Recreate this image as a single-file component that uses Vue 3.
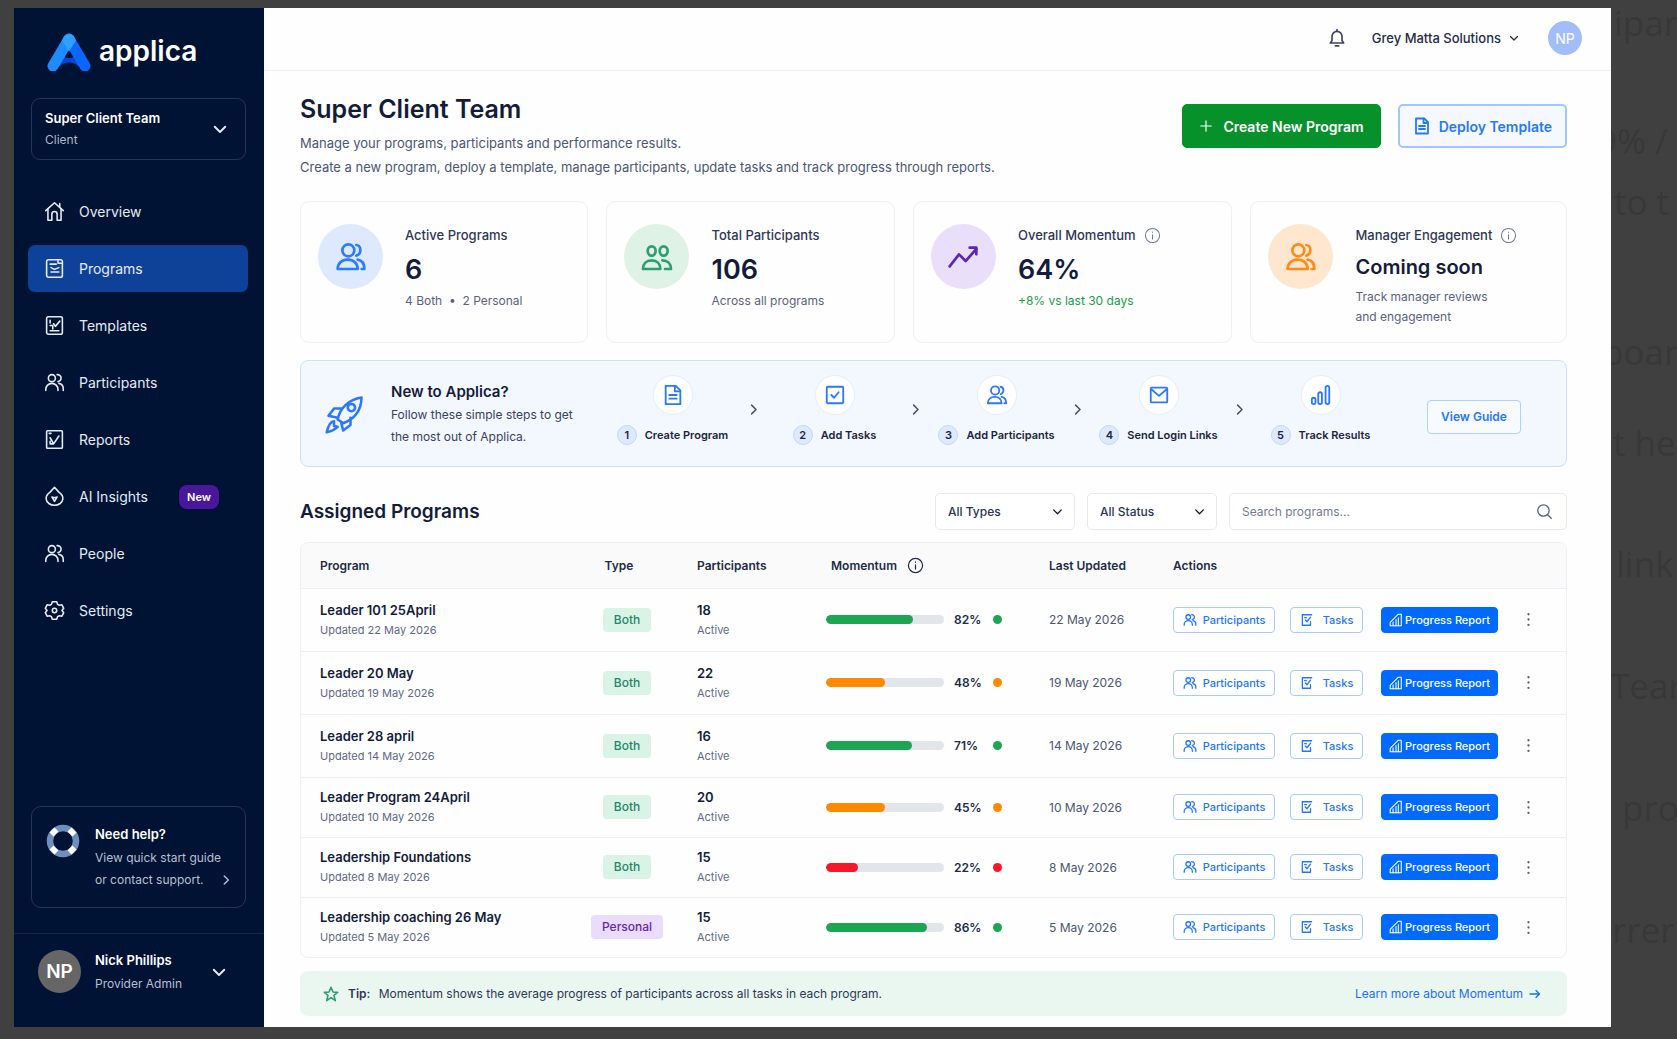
<template>
  <div class="backdrop">
    <div class="behind" aria-hidden="true">
      <span v-for="word in behind" :key="word.text" :style="{ top: word.top + 'px', left: word.left + 'px' }">{{ word.text }}</span>
    </div>

    <div class="window">
      <aside class="sidebar">
        <a class="logo" href="#">
          <svg width="44" height="38" viewBox="0 0 44 38" aria-hidden="true">
            <path d="M14 24h17l3 9H10z" fill="#0645d8" />
            <path d="M22 6 6 33" stroke="#1e8bff" stroke-width="11" stroke-linecap="round" />
            <path d="M22 6 38 33" stroke="#0b66ff" stroke-width="11" stroke-linecap="round" />
            <path d="M17 3.600a6 6 0 0 1 10 0l2 4-7 11-7-11z" fill="#2ea0ff" />
            <path d="m22 19 3.500 6h-7z" fill="#00123a" />
            <path d="M14 32c4-3.500 12-3.500 16 0l3 7H11z" fill="#001334" />
          </svg>
          <span>applica</span>
        </a>

        <button class="team">
          <span class="team-text">
            <b>Super Client Team</b>
            <small>Client</small>
          </span>
          <Icon name="down" :size="18" :stroke="2.5" />
        </button>

        <nav>
          <a v-for="item in nav" :key="item.label" href="#" :class="{ active: item.label === activePage }" @click.prevent="activePage = item.label">
            <Icon :name="item.icon" :size="21" :stroke="1.8" />
            <span>{{ item.label }}</span>
            <em v-if="item.isNew">New</em>
          </a>
        </nav>

        <a class="help" href="#">
          <svg width="34" height="34" viewBox="0 0 34 34" fill="none" aria-hidden="true">
            <circle cx="17" cy="17" r="13" stroke="#6f8fbe" stroke-width="6.500" />
            <path d="m6 6 4 4m18-4-4 4M6 28l4-4m18 4-4-4" stroke="#fff" stroke-width="7" />
          </svg>
          <span class="help-text">
            <b>Need help?</b>
            <span>View quick start guide</span>
            <span class="help-last">or contact support. <Icon name="right" :size="14" :stroke="2.5" /></span>
          </span>
        </a>

        <button class="user">
          <span class="user-avatar">NP</span>
          <span class="user-text">
            <b>Nick Phillips</b>
            <small>Provider Admin</small>
          </span>
          <Icon name="down" :size="18" :stroke="2.5" />
        </button>
      </aside>

      <div class="page">
        <header class="topbar">
          <button class="plain" aria-label="Notifications"><Icon name="bell" :size="20" /></button>
          <button class="plain org">Grey Matta Solutions <Icon name="down" :size="12" :stroke="2.5" /></button>
          <button class="plain avatar" aria-label="Account">NP</button>
        </header>

        <main>
          <section class="intro">
            <div>
              <h1>Super Client Team</h1>
              <p>Manage your programs, participants and performance results.</p>
              <p>Create a new program, deploy a template, manage participants, update tasks and track progress through reports.</p>
            </div>
            <div class="intro-actions">
              <button class="create"><Icon name="plus" :size="14" />Create New Program</button>
              <button class="deploy"><Icon name="doc" :size="18" :stroke="2.4" />Deploy Template</button>
            </div>
          </section>

          <section class="stats">
            <article v-for="stat in stats" :key="stat.label" class="card">
              <span class="stat-icon" :class="stat.tone"><Icon :name="stat.icon" :size="32" /></span>
              <div>
                <h3>{{ stat.label }} <Icon v-if="stat.info" name="info" :size="17" :stroke="1.5" /></h3>
                <strong :class="{ soon: stat.tone === 'orange' }">{{ stat.value }}</strong>
                <p :class="{ gain: stat.tone === 'purple' }"><span v-for="line in stat.note" :key="line">{{ line }}</span></p>
              </div>
            </article>
          </section>

          <section class="guide">
            <Icon class="rocket" name="rocket" :size="44" :stroke="1.4" />
            <div class="guide-text">
              <h3>New to Applica?</h3>
              <p>Follow these simple steps to get<br>the most out of Applica.</p>
            </div>
            <ol>
              <template v-for="(step, i) in steps" :key="step.label">
                <li v-if="i" class="sep" aria-hidden="true"><Icon name="right" :size="15" :stroke="2.4" /></li>
                <li class="step">
                  <span class="step-icon"><Icon :name="step.icon" :size="22" /></span>
                  <span class="step-label"><i>{{ i + 1 }}</i>{{ step.label }}</span>
                </li>
              </template>
            </ol>
            <button class="view">View Guide</button>
          </section>

          <section class="list-head">
            <h2>Assigned Programs</h2>
            <div class="select type">
              <select v-model="type" aria-label="Type">
                <option>All Types</option>
                <option>Both</option>
                <option>Personal</option>
              </select>
              <Icon name="down" :size="13" :stroke="2.5" />
            </div>
            <div class="select status">
              <select v-model="status" aria-label="Status">
                <option>All Status</option>
                <option>Active</option>
              </select>
              <Icon name="down" :size="13" :stroke="2.5" />
            </div>
            <label class="search">
              <input v-model="search" type="search" placeholder="Search programs..." aria-label="Search programs">
              <Icon name="search" :size="17" :stroke="1.8" />
            </label>
          </section>

          <div class="table-box">
            <table>
              <thead>
                <tr>
                  <th>Program</th>
                  <th class="c-type">Type</th>
                  <th class="c-part">Participants</th>
                  <th class="c-mom"><span>Momentum <Icon name="info" :size="17" :stroke="1.7" /></span></th>
                  <th class="c-date">Last Updated</th>
                  <th class="c-act">Actions</th>
                </tr>
              </thead>
              <tbody>
                <tr v-for="row in visible" :key="row.name">
                  <td><b>{{ row.name }}</b><small>Updated {{ row.date }}</small></td>
                  <td class="c-type"><span class="tag" :class="row.type.toLowerCase()">{{ row.type }}</span></td>
                  <td><b>{{ row.people }}</b><small>Active</small></td>
                  <td>
                    <div class="momentum" :class="row.level">
                      <span class="track"><span :style="{ width: row.bar + '%' }"></span></span>
                      <b>{{ row.momentum }}%</b>
                      <i></i>
                    </div>
                  </td>
                  <td>{{ row.date }}</td>
                  <td>
                    <div class="actions">
                      <button class="outline people"><Icon name="people" :size="14" :stroke="2.2" />Participants</button>
                      <button class="outline tasks"><Icon name="task" :size="14" :stroke="2.2" />Tasks</button>
                      <button class="report"><Icon name="chart" :size="14" :stroke="1.8" />Progress Report</button>
                      <button class="plain more" aria-label="More"><Icon name="dots" :size="17" /></button>
                    </div>
                  </td>
                </tr>
              </tbody>
            </table>
          </div>

          <section class="tip">
            <Icon name="star" :size="16" :stroke="2.4" />
            <p><b>Tip:</b> Momentum shows the average progress of participants across all tasks in each program.</p>
            <a href="#">Learn more about Momentum <Icon name="arrow" :size="12" :stroke="2.6" /></a>
          </section>
        </main>
      </div>
    </div>
  </div>
</template>

<script setup>
import { computed, h, ref } from 'vue'

const paths = {
  home: ['M2 11 12 2l10 9', 'M4.500 9v13H9v-7a3 3 0 0 1 6 0v7h4.500V9', 'M18 3v4'],
  programs: ['M5 2h14a2 2 0 0 1 2 2v16a2 2 0 0 1-2 2H5a2 2 0 0 1-2-2V4a2 2 0 0 1 2-2z', 'M7 7h7M8 11l4 2 5-2M8 16h9', 'M16 2v4h5'],
  templates: ['M5 2h14a2 2 0 0 1 2 2v16a2 2 0 0 1-2 2H5a2 2 0 0 1-2-2V4a2 2 0 0 1 2-2z', 'M7 6v3M7 12h3v4M11 10l2 3 5-6M7 18h10'],
  reports: ['M4 2h16a1 1 0 0 1 1 1v18a1 1 0 0 1-1 1H4a1 1 0 0 1-1-1V3a1 1 0 0 1 1-1z', 'M6 5h2M7 10l4 7 6-9M7 14v3h3'],
  people: ['M9 3a4 4 0 1 1 0 8 4 4 0 0 1 0-8z', 'M2 21v-1a7 7 0 0 1 14 0v1', 'M15 3a4 4 0 1 1 1 8', 'M17 13c3 .5 5 3 5 6v2'],
  users: ['M10 2.500a4 4 0 1 1 0 9 4 4 0 0 1 0-9z', 'M2 21c0-4 3-7 7.500-7s7.500 3 7.500 7z', 'M16 3c4 .5 4 7 0 8', 'M17 14c3 .5 5 3 5 7h-2'],
  pair: ['M8 4a3 3.500 0 1 1 0 7 3 3.500 0 0 1 0-7z', 'M17 4a3 3.500 0 1 1 0 7 3 3.500 0 0 1 0-7z', 'M1.500 21c0-4 2.500-6.500 6.500-6.500s6.500 2.500 6.500 6.500z', 'M16 14.500c4 0 6.500 2.500 6.500 6.500H18'],
  insight: ['M12 1.500 17 7c3 2 5 4 4.500 8-.5 4-4.500 7-9.500 7s-9-3-9.500-7C2 11 4 9 7 7z', 'M9 12.500l3 5 3-5-3 1z'],
  gear: ['M12 9.500a2.500 2.500 0 1 1 0 5 2.500 2.500 0 0 1 0-5z', 'M9.500 2h5l1 3 2 1 3-.5 2 4-2 2.500 2 2.500-2 4-3-.5-2 1-1 3h-5l-1-3-2-1-3 .5-2-4 2-2.500-2-2.500 2-4 3 .5 2-1z'],
  down: ['m5 9 7 7 7-7'],
  right: ['m9 5 7 7-7 7'],
  bell: ['M4 18h16l-2-3v-5a6 6 0 0 0-12 0v5z', 'M10 21.500h4', 'M12 2v2'],
  plus: ['M12 3v18M3 12h18'],
  doc: ['M4 2h11l5 5v15H4z', 'M14 2v6h6', 'M8 12h8M8 16h8'],
  trend: ['m2 19 7-9 5 5 8-9', 'M17 5h5v5'],
  info: ['M12 2a10 10 0 1 1 0 20 10 10 0 0 1 0-20z', 'M12 11v6M12 7v.5'],
  check: ['M4 3h16a1 1 0 0 1 1 1v16a1 1 0 0 1-1 1H4a1 1 0 0 1-1-1V4a1 1 0 0 1 1-1z', 'm8 12 3 3 5-6'],
  task: ['M20 3H4v18h14v-6', 'm9 12 3 3 6-8', 'M8 8h3'],
  mail: ['M4 4h16a1 1 0 0 1 1 1v14a1 1 0 0 1-1 1H4a1 1 0 0 1-1-1V5a1 1 0 0 1 1-1z', 'm4 6 8 7 8-7'],
  bars: ['M2 17a2 2 0 0 1 4 0v3a2 2 0 0 1-4 0z', 'M9 11a2 2 0 0 1 4 0v9a2 2 0 0 1-4 0z', 'M17 4a2 2 0 0 1 4 0v16a2 2 0 0 1-4 0z'],
  chart: ['M2 22V16L16 2h5v20z', 'M7 22v-7M12 22V11M16 22V8'],
  rocket: ['M8 15C9 9 14 4 21 3c0 7-4 12-10 14z', 'M15.500 6.500a2 2 0 1 1 0 4 2 2 0 0 1 0-4z', 'M10 9H6l-3 4 5 1', 'M15 14v4l-4 3-1-4', 'M6 16c-2 0-3 2-4 6 4-1 5-2 6-3l-2-.5z'],
  search: ['M10.500 2.500a8 8 0 1 1 0 16 8 8 0 0 1 0-16z', 'm16.500 16.500 5 5'],
  dots: ['M12 4.500v.1M12 12v.1M12 19.500v.1'],
  star: ['m12 2 3 7 7 .5-5.500 4.500L18.500 22 12 17.500 5.500 22l2-8L2 9.500 9 9z'],
  arrow: ['M2 12h19M14 5l7 7-7 7'],
}

// small stroke icon on a 24 unit grid
const Icon = (props) => h('svg', {
  class: 'icon',
  width: props.size,
  height: props.size,
  viewBox: '0 0 24 24',
  fill: 'none',
  stroke: 'currentColor',
  'stroke-width': props.name === 'dots' ? 3.2 : props.stroke || 2,
  'stroke-linecap': 'round',
  'stroke-linejoin': 'round',
  'aria-hidden': 'true',
}, paths[props.name].map(d => h('path', { d })))
Icon.props = ['name', 'size', 'stroke']

const activePage = ref('Programs')
const type = ref('All Types')
const status = ref('All Status')
const search = ref('')

const behind = [
  { text: 'ipar', top: 0, left: 1614 },
  { text: '9% /', top: 118, left: 1597 },
  { text: 'to t', top: 179, left: 1614 },
  { text: 'boar', top: 329, left: 1602 },
  { text: 't he', top: 420, left: 1613 },
  { text: 'link', top: 541, left: 1616 },
  { text: 'Tear', top: 663, left: 1610 },
  { text: 'pro', top: 785, left: 1622 },
  { text: 'rrer', top: 907, left: 1612 },
]

const nav = [
  { label: 'Overview', icon: 'home' },
  { label: 'Programs', icon: 'programs' },
  { label: 'Templates', icon: 'templates' },
  { label: 'Participants', icon: 'people' },
  { label: 'Reports', icon: 'reports' },
  { label: 'AI Insights', icon: 'insight', isNew: true },
  { label: 'People', icon: 'people' },
  { label: 'Settings', icon: 'gear' },
]

const stats = [
  { label: 'Active Programs', value: '6', note: ['4 Both  •  2 Personal'], icon: 'users', tone: 'blue' },
  { label: 'Total Participants', value: '106', note: ['Across all programs'], icon: 'pair', tone: 'green' },
  { label: 'Overall Momentum', value: '64%', note: ['+8% vs last 30 days'], icon: 'trend', tone: 'purple', info: true },
  { label: 'Manager Engagement', value: 'Coming soon', note: ['Track manager reviews', 'and engagement'], icon: 'users', tone: 'orange', info: true },
]

const steps = [
  { label: 'Create Program', icon: 'doc' },
  { label: 'Add Tasks', icon: 'check' },
  { label: 'Add Participants', icon: 'users' },
  { label: 'Send Login Links', icon: 'mail' },
  { label: 'Track Results', icon: 'bars' },
]

const rows = [
  { name: 'Leader 101 25April', date: '22 May 2026', type: 'Both', people: 18, momentum: 82, bar: 74, level: 'high' },
  { name: 'Leader 20 May', date: '19 May 2026', type: 'Both', people: 22, momentum: 48, bar: 50, level: 'mid' },
  { name: 'Leader 28 april', date: '14 May 2026', type: 'Both', people: 16, momentum: 71, bar: 73, level: 'high' },
  { name: 'Leader Program 24April', date: '10 May 2026', type: 'Both', people: 20, momentum: 45, bar: 50, level: 'mid' },
  { name: 'Leadership Foundations', date: '8 May 2026', type: 'Both', people: 15, momentum: 22, bar: 27, level: 'low' },
  { name: 'Leadership coaching 26 May', date: '5 May 2026', type: 'Personal', people: 15, momentum: 86, bar: 86, level: 'high' },
]

const visible = computed(() => rows.filter(row =>
  (type.value === 'All Types' || row.type === type.value) &&
  row.name.toLowerCase().includes(search.value.toLowerCase())
))
</script>

<style>
body {
  background: #404040;
}
</style>

<style scoped>
* {
  box-sizing: border-box;
}

.backdrop {
  position: relative;
  display: grid;
  min-height: 100vh;
  padding: 8px 66px 12px 14px;
  overflow: hidden;
  background: #404040;
  color: #141c3a;
  font-family: Inter, "Liberation Sans", sans-serif;
  font-size: 12px;
}

.behind {
  position: absolute;
  inset: 0;
}

.behind span {
  position: absolute;
  color: #383838;
  font: 35px/46px "Open Sans", sans-serif;
  white-space: nowrap;
}

.window {
  position: relative;
  display: grid;
  grid-template-columns: 250px minmax(0, 1fr);
  background: #fefefe;
}

h1, h2, h3, p, ol {
  margin: 0;
  padding: 0;
}

b {
  font-weight: 600;
}

button, select, input {
  font: inherit;
  color: inherit;
}

button {
  display: inline-flex;
  align-items: center;
  cursor: pointer;
}

a {
  color: inherit;
  text-decoration: none;
}

.icon {
  flex: none;
}

.plain {
  padding: 0;
  border: 0;
  background: none;
}

/* sidebar */
.sidebar {
  display: flex;
  flex-direction: column;
  background: #001334;
  color: #e6eaf3;
}

.logo {
  display: flex;
  align-items: center;
  gap: 8px;
  margin: 21px 0 0 33px;
  height: 46px;
  color: #fff;
  font-size: 28px;
  font-weight: 600;
  line-height: 40px;
}

.logo span {
  padding-bottom: 2px;
}

.team {
  justify-content: space-between;
  margin: 23px 18px 0 17px;
  height: 62px;
  padding: 0 16px 0 13px;
  border: 1px solid #24355a;
  border-radius: 9px;
  background: none;
  text-align: left;
}

.team-text b, .team-text small {
  display: block;
  font-size: 13px;
  line-height: 22px;
}

.team-text small {
  color: #aeb8cc;
  font-size: 12px;
}

nav {
  display: flex;
  flex-direction: column;
  gap: 10px;
  margin: 28px 16px 0 14px;
}

nav a {
  display: flex;
  align-items: center;
  gap: 14px;
  height: 47px;
  padding: 0 29px 0 16px;
  border-radius: 7px;
  font-size: 14px;
  font-weight: 400;
}

nav a.active {
  background: #0d4298;
}

nav em {
  margin-left: auto;
  padding: 0 8px;
  border-radius: 8px;
  background: #4a179c;
  color: #fff;
  font-size: 11px;
  font-style: normal;
  font-weight: 600;
  line-height: 24px;
}

.help {
  display: flex;
  gap: 15px;
  margin: auto 18px 25px 17px;
  padding: 17px 12px 16px 14px;
  height: 102px;
  border: 1px solid #24355a;
  border-radius: 10px;
  color: #b6bfd2;
}

.help-text {
  flex: 1;
  line-height: 22px;
  white-space: nowrap;
}

.help-text > * {
  display: block;
}

.help-text b, .team-text b, .user-text b {
  color: #fff;
  font-size: 13px;
}

.help-text b {
  margin-bottom: 3px;
  line-height: 20px;
}

.help-text .help-last {
  display: flex;
  align-items: center;
  justify-content: space-between;
}

.user {
  gap: 14px;
  height: 94px;
  padding: 0 36px 18px 24px;
  border: 0;
  border-top: 1px solid #14274b;
  background: none;
  text-align: left;
}

.user-avatar {
  display: grid;
  place-items: center;
  width: 43px;
  height: 43px;
  border-radius: 50%;
  background: #666;
  color: #fff;
  font-size: 19px;
  font-weight: 600;
}

.user-text {
  flex: 1;
}

.user-text b, .user-text small {
  display: block;
  font-size: 13px;
  line-height: 23px;
}

.user-text small {
  color: #b6bfd2;
  font-size: 12px;
}

/* header */
.topbar {
  display: flex;
  align-items: center;
  justify-content: flex-end;
  height: 63px;
  padding: 0 29px 2px 0;
  border-bottom: 1px solid #eceff5;
  color: #3c4560;
}

.org {
  gap: 7px;
  margin: 0 28px 0 25px;
  color: #252d46;
  font-size: 13px;
  font-weight: 500;
}

.avatar {
  justify-content: center;
  width: 34px;
  height: 34px;
  border-radius: 50%;
  background: #a3bdfb;
  color: #fff;
  font-size: 14px;
}

main {
  padding: 21px 44px 10px 36px;
}

.intro {
  display: flex;
  align-items: flex-start;
  justify-content: space-between;
}

h1 {
  margin-bottom: 5px;
  font-size: 25px;
  font-weight: 600;
  line-height: 34px;
}

.intro p {
  color: #4c5673;
  font-size: 13px;
  line-height: 24px;
}

.intro-actions {
  display: flex;
  gap: 17px;
  padding-top: 12px;
}

.create, .deploy {
  justify-content: center;
  height: 44px;
  border: 1px solid #07912b;
  border-radius: 5px;
  background: #07912b;
  color: #fff;
  font-size: 14px;
  font-weight: 600;
  gap: 10px;
  padding: 0 16px;
  white-space: nowrap;
}

.deploy {
  padding: 0 13px;
  border: 2px solid #a3c5ff;
  background: #f5f9ff;
  color: #2678fb;
  gap: 8px;
}

.stats {
  display: grid;
  grid-template-columns: 288fr 288fr 319fr 316fr;
  gap: 18px;
  margin-top: 22px;
}

.card {
  display: flex;
  gap: 22px;
  height: 142px;
  padding: 22px 17px;
  border: 1px solid #edf0f6;
  border-radius: 9px;
}

.stat-icon {
  display: grid;
  flex: none;
  place-items: center;
  width: 65px;
  height: 65px;
  border-radius: 50%;
}

.blue { background: #dfe9fd; color: #2b7bff; }
.green { background: #def3e6; color: #2f9d70; }
.purple { background: #e9dffa; color: #5b25b5; }
.orange { background: #fee6cf; color: #ff8a17; }

.card h3 {
  display: flex;
  align-items: center;
  gap: 8px;
  height: 22px;
  color: #2e3755;
  font-size: 13px;
  font-weight: 500;
}

.card h3 .icon {
  color: #707a94;
}

.card strong {
  display: block;
  height: 45px;
  font-size: 27px;
  font-weight: 600;
  line-height: 48px;
}

.card strong.soon {
  height: 41px;
  font-size: 20px;
  line-height: 42px;
}

.card p {
  color: #596280;
  line-height: 20px;
  white-space: pre;
}

.card p span {
  display: block;
}

.card p.gain {
  color: #15a046;
}

/* onboarding strip */
.guide {
  display: flex;
  align-items: center;
  height: 107px;
  margin-top: 17px;
  padding: 0 45px 0 22px;
  border: 1px solid #cfe0fd;
  border-radius: 8px;
  background: #f3f7fe;
}

.rocket {
  color: #2b78fa;
}

.guide-text {
  flex: none;
  width: 208px;
  margin-left: 24px;
}

.guide h3 {
  font-size: 15px;
  font-weight: 600;
  line-height: 24px;
}

.guide-text p {
  color: #39425f;
  font-size: 12px;
  line-height: 22px;
  white-space: nowrap;
}

ol {
  display: flex;
  flex: 1;
  align-items: center;
  padding-bottom: 8px;
  list-style: none;
}

.step {
  display: flex;
  flex: 1;
  flex-direction: column;
  align-items: center;
  gap: 10px;
  min-width: 0;
}

.step-icon {
  display: grid;
  place-items: center;
  width: 40px;
  height: 40px;
  border: 1px solid #e6eefb;
  border-radius: 50%;
  background: #fff;
  color: #2b78fa;
}

.step-label {
  display: flex;
  align-items: center;
  gap: 8px;
  color: #1c2440;
  font-size: 11px;
  font-weight: 600;
  white-space: nowrap;
}

.step-label i {
  display: grid;
  place-items: center;
  width: 20px;
  height: 20px;
  border: 1px solid #c2d7fd;
  border-radius: 50%;
  background: #dfe9fd;
  font-style: normal;
}

.sep {
  display: flex;
  color: #4a5162;
}

.view {
  justify-content: center;
  width: 94px;
  height: 34px;
  margin-top: 6px;
  margin-left: 33px;
  padding: 0;
  border: 1px solid #b3cffe;
  border-radius: 4px;
  background: #f7faff;
  color: #2678fb;
  font-weight: 600;
}

.list-head {
  display: flex;
  align-items: center;
  gap: 12px;
  margin: 26px 0 12px;
}

h2 {
  flex: 1;
  font-size: 19px;
  font-weight: 600;
  line-height: 30px;
}

.select, .search {
  position: relative;
  height: 37px;
  border: 1px solid #e6e9f1;
  border-radius: 5px;
  background: #fff;
}

.select.type { width: 140px; }
.select.status { width: 130px; }

select {
  width: 100%;
  height: 100%;
  padding: 0 12px;
  border: 0;
  background: none;
  appearance: none;
  color: #2b3452;
  font-weight: 500;
}

.select .icon {
  position: absolute;
  top: 11px;
  right: 10px;
  pointer-events: none;
}

.search {
  display: flex;
  align-items: center;
  width: 338px;
  padding: 0 13px 0 12px;
  color: #59627c;
}

.search input {
  flex: 1;
  min-width: 0;
  padding: 0;
  border: 0;
  outline: 0;
  background: none;
}

.search input::placeholder {
  color: #727b92;
  opacity: 1;
}

/* programs table */
.table-box {
  overflow: hidden;
  border: 1px solid #eceff5;
  border-radius: 8px;
}

table {
  width: 100%;
  table-layout: fixed;
  border-collapse: collapse;
}

.c-type { width: 140px; }
.c-part { width: 129px; }
.c-mom { width: 223px; }
.c-date { width: 124px; }
.c-act { width: 393px; }

th {
  height: 45px;
  padding: 0;
  background: #fafafb;
  color: #232b47;
  font-size: 12px;
  font-weight: 600;
  text-align: left;
}

th.c-type {
  padding-right: 16px;
}

.c-type {
  text-align: center;
}

.c-mom span {
  display: flex;
  align-items: center;
  gap: 10px;
  padding-left: 5px;
}

td {
  height: 63px;
  padding: 0;
  border-top: 1px solid #eceff5;
  color: #4c5673;
}

tr:nth-child(n + 4) td {
  height: 60px;
}

th:first-child, td:first-child {
  padding-left: 19px;
}

td > b, td > small {
  display: block;
  color: #141c3a;
  font-size: 13px;
  line-height: 20px;
  white-space: nowrap;
}

td > small {
  color: #606985;
  font-size: 11px;
}

.tag {
  display: inline-block;
  padding: 0 11px;
  border-radius: 4px;
  font-weight: 500;
  line-height: 24px;
}

.tag.both { background: #d9f3e7; color: #23866a; }
.tag.personal { background: #eadcfc; color: #6426b8; }

.momentum {
  display: flex;
  align-items: center;
}

.high { --level: #1ca654; }
.mid { --level: #ff8a00; }
.low { --level: #fb1528; }

.track {
  width: 118px;
  height: 9px;
  overflow: hidden;
  border-radius: 5px;
  background: #e2e5ea;
}

.track span {
  display: block;
  height: 100%;
  border-radius: 5px;
  background: var(--level);
}

.momentum b {
  width: 39px;
  margin-left: 10px;
  color: #232b47;
}

.momentum i {
  width: 9px;
  height: 9px;
  border-radius: 50%;
  background: var(--level);
}

.actions {
  display: flex;
  align-items: center;
}

.actions button {
  justify-content: center;
  white-space: nowrap;
}

.outline, .report {
  height: 26px;
  padding: 0;
  border: 1px solid #a9c9ff;
  border-radius: 4px;
  background: #fff;
  color: #2176fb;
  font-size: 11px;
  font-weight: 500;
}

.people { width: 102px; margin-right: 15px; gap: 6px; }
.tasks { width: 73px; margin-right: 18px; gap: 9px; }
.report { width: 117px; gap: 2px; border-color: #006aff; background: #006aff; color: #fff; }

.more {
  margin-left: 22px;
  color: #59627c;
}

.tip {
  display: flex;
  align-items: center;
  gap: 9px;
  height: 45px;
  margin-top: 13px;
  padding: 0 26px 0 23px;
  border-radius: 8px;
  background: #eaf6f0;
}

.tip > .icon {
  color: #2f9d70;
}

.tip p {
  flex: 1;
  color: #2e3755;
}

.tip b {
  margin-right: 5px;
}

.tip a {
  display: flex;
  align-items: center;
  gap: 6px;
  color: #1f6ef5;
}
</style>
